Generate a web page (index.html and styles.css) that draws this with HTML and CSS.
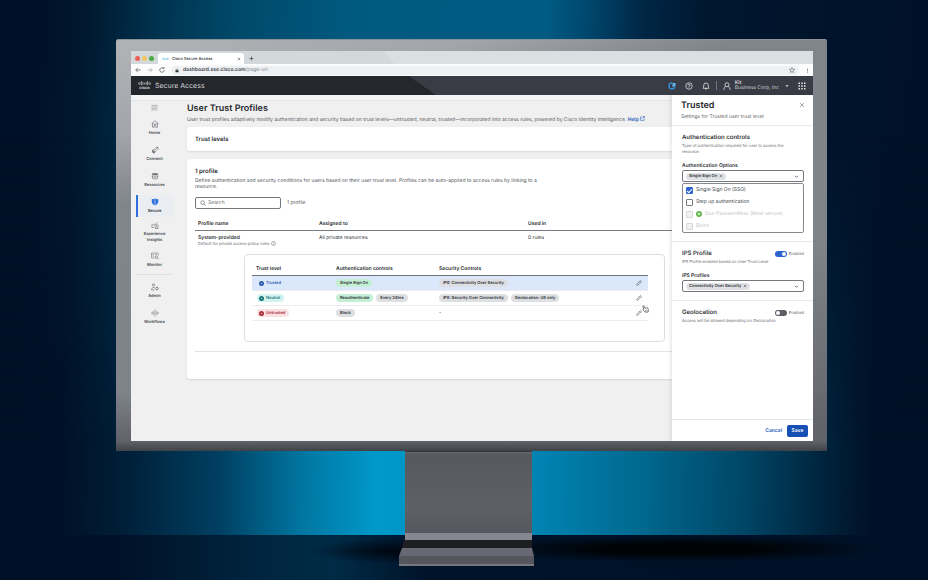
FILE: index.html
```html
<!DOCTYPE html>
<html lang="en">
<head>
<meta charset="utf-8">
<title>Cisco Secure Access</title>
<link rel="stylesheet" href="styles.css">
</head>
<body>
<svg class="sprite" aria-hidden="true">
  <symbol id="cisco" viewBox="0 0 28 10"><path d="M1 4v2M4.200 2.500v5M7.400 0v7.500M10.600 2.500v5M14 4v2M17.400 2.500v5M20.600 0v7.500M23.800 2.500v5M27 4v2" fill="none" stroke="currentColor" stroke-width="1.500" stroke-linecap="round"/></symbol>
  <symbol id="pencil" viewBox="0 0 16 16"><path d="M2 14l1-4 7.500-7.500q1.500-1.500 3 0t0 3L6 13zM8.500 4.500l3 3" fill="none" stroke="currentColor" stroke-width="1.600"/></symbol>
  <symbol id="chevron" viewBox="0 0 16 16"><path d="M3 5.500l5 5 5-5" fill="none" stroke="currentColor" stroke-width="2"/></symbol>
  <symbol id="cross" viewBox="0 0 16 16"><path d="M3 3l10 10M13 3L3 13" fill="none" stroke="currentColor" stroke-width="1.800"/></symbol>
</svg>
<div class="stage">
  <div class="monitor">
    <div class="screen">
      <div class="tabs">
        <span class="dot red"></span><span class="dot yellow"></span><span class="dot green"></span>
        <div class="tab"><svg class="tab-logo"><use href="#cisco"/></svg><span>Cisco Secure Access</span><button class="plain tab-close" aria-label="Close tab"><svg><use href="#cross"/></svg></button></div>
        <button class="plain new-tab" aria-label="New tab"><svg viewBox="0 0 16 16"><path d="M8 2v12M2 8h12" stroke="currentColor" stroke-width="2"/></svg></button>
      </div>
      <div class="toolbar">
        <svg class="nav-icon" viewBox="0 0 16 16"><path d="M15 8H2M8 2L2 8l6 6" fill="none" stroke="currentColor" stroke-width="2"/></svg>
        <svg class="nav-icon muted" viewBox="0 0 16 16"><path d="M1 8h13M8 2l6 6-6 6" fill="none" stroke="currentColor" stroke-width="2"/></svg>
        <svg class="nav-icon" viewBox="0 0 16 16"><path d="M12 3.500A6 6 0 1 0 14 8M9 4h4.500V0" fill="none" stroke="currentColor" stroke-width="2"/></svg>
        <div class="address">
          <svg class="lock" viewBox="0 0 16 16"><rect x="2" y="7" width="12" height="8" rx="1" fill="currentColor"/><path d="M5 7V5a3 3 0 0 1 6 0v2" fill="none" stroke="currentColor" stroke-width="2"/></svg>
          <span><b>dashboard.sse.cisco.com</b>/page-url</span>
          <svg class="star" viewBox="0 0 16 16"><path d="M8 1.500l2 4.500 5 .5-3.700 3.300 1 5L8 12l-4.300 2.800 1-5L1 6.500 6 6z" fill="none" stroke="currentColor" stroke-width="1.600"/></svg>
        </div>
        <svg class="more" viewBox="0 0 4 16"><path d="M0 1h4v3H0zM0 7h4v3H0zM0 13h4v3H0z" fill="currentColor"/></svg>
      </div>
      <header class="topbar">
        <div class="brand"><svg class="brand-mark"><use href="#cisco"/></svg><span>cisco</span></div>
        <span class="product">Secure Access</span>
        <svg class="top-icon" viewBox="0 0 16 16"><path d="M9 2A6 6 0 1 0 14 9" fill="none" stroke="#2f9be8" stroke-width="2.500"/><path d="M10 2h5v6h-2l-4 3V3z" fill="#5fb8f2"/></svg>
        <svg class="top-icon" viewBox="0 0 16 16"><circle cx="8" cy="8" r="6.500" fill="none" stroke="currentColor" stroke-width="1.500"/><path d="M5.800 6.500q0-2 2.200-2t2.200 2Q10.200 8 8 8.500V10M8 11v1.500" fill="none" stroke="currentColor" stroke-width="1.500"/></svg>
        <svg class="top-icon" viewBox="0 0 16 16"><path d="M2 12.500h12Q12.500 11 12.500 6.500a4.500 4.500 0 0 0-9 0Q3.500 11 2 12.500zM6 13q2 3 4 0" fill="none" stroke="currentColor" stroke-width="1.600"/></svg>
        <span class="rule"></span>
        <svg class="top-icon" viewBox="0 0 16 16"><circle cx="8" cy="5.500" r="4" fill="none" stroke="currentColor" stroke-width="1.600"/><path d="M1.500 15.500Q2 9.500 5.500 9M14.500 15.500Q14 9.500 10.500 9" fill="none" stroke="currentColor" stroke-width="1.600"/></svg>
        <div class="account"><b>Kit</b><span>Business Corp, Inc</span></div>
        <svg class="caret" viewBox="0 0 16 16"><path d="M2 5h12l-6 7z" fill="currentColor"/></svg>
        <svg class="top-icon" viewBox="0 0 16 16"><path d="M1 1h3v3H1zM6.500 1h3v3h-3zM12 1h3v3h-3zM1 6.500h3v3H1zM6.500 6.500h3v3h-3zM12 6.500h3v3h-3zM1 12h3v3H1zM6.500 12h3v3h-3zM12 12h3v3h-3z" fill="currentColor"/></svg>
      </header>
      <div class="body">
        <div class="workspace">
          <div class="strip"></div>
          <div class="columns">
            <nav class="sidebar">
              <button class="plain menu" aria-label="Menu"><svg viewBox="0 0 16 16"><path d="M1 3h14M1 6.500h14M1 10h14M1 13.500h14" stroke="currentColor" stroke-width="1.200"/></svg></button>
              <a class="item" href="#"><svg viewBox="0 0 16 16"><path d="M1 7l7-5.500L15 7M3 6v8.500h3.500V10h3v4.500H13V6M4 8h8" fill="none" stroke="currentColor" stroke-width="1.300"/></svg>Home</a>
              <a class="item" href="#"><svg viewBox="0 0 16 16"><path d="M2 7l7 7-4 1-3-3z" fill="currentColor"/><path d="M4 8l3-2 3 3-2 3zM9 2.500h5V8M14 2L9 7" fill="none" stroke="currentColor" stroke-width="1.400"/></svg>Connect</a>
              <a class="item" href="#"><svg viewBox="0 0 16 16"><path d="M2 3q6-2.500 12 0v3H2z" fill="currentColor"/><path d="M1 8h14M3 8v5q5 2 10 0V8M6 10.500h4" fill="none" stroke="currentColor" stroke-width="1.400"/></svg>Resources</a>
              <a class="item active" href="#"><svg viewBox="0 0 16 16"><path d="M7.400 1Q5 2.500 1.500 2.500v5Q2 13 7.400 15z" fill="#2f70df"/><path d="M8.600 1Q11 2.500 14.500 2.500v5Q14 13 8.600 15z" fill="#2f70df"/></svg>Secure</a>
              <a class="item tall" href="#"><svg viewBox="0 0 16 16"><path d="M1 13h5M1 10l4-4 3 1 5-5M2 7v5" fill="none" stroke="currentColor" stroke-width="1.200"/><circle cx="11" cy="10.500" r="3.500" fill="none" stroke="currentColor" stroke-width="1.300"/><path d="M11 8.500v3M8 15h7" stroke="currentColor" stroke-width="1.200"/></svg>Experience<br>Insights</a>
              <a class="item" href="#"><svg viewBox="0 0 16 16"><path d="M1 2h13v5M1 2v10h6M3 5h3M8 5h3M3 8h3" fill="none" stroke="currentColor" stroke-width="1.200"/><circle cx="10.500" cy="10" r="2.500" fill="none" stroke="currentColor" stroke-width="1.300"/><path d="M12.500 12l3 3" stroke="currentColor" stroke-width="1.300"/></svg>Monitor</a>
              <hr>
              <a class="item" href="#"><svg viewBox="0 0 16 16"><circle cx="5" cy="4" r="2.300" fill="none" stroke="currentColor" stroke-width="1.400"/><path d="M1 14q0-5 4-5 2 0 3 1.500M1 14h6" fill="none" stroke="currentColor" stroke-width="1.400"/><circle cx="12" cy="11" r="2.600" fill="none" stroke="currentColor" stroke-width="1.800"/></svg>Admin</a>
              <a class="item" href="#"><svg viewBox="0 0 16 16"><path d="M0 8h4M12 8h4M8 1v4M8 11v4M5 4Q2.500 8 5 12M11 4q2.500 4 0 8" fill="none" stroke="currentColor" stroke-width="1.300"/><circle cx="8" cy="8" r="1.500" fill="currentColor"/></svg>Workflows</a>
            </nav>
            <main class="main">
              <h1>User Trust Profiles</h1>
              <p class="lead">User trust profiles adaptively modify authentication and security based on trust levels—untrusted, neutral, trusted—incorporated into access rules, powered by Cisco Identity Intelligence. <a href="#">Help <svg viewBox="0 0 16 16"><path d="M7 3H2v11h11V9M9 1.500h5.500V7M14 2L7.500 8.500" fill="none" stroke="currentColor" stroke-width="1.800"/></svg></a></p>
              <section class="card levels"><h2>Trust levels</h2></section>
              <section class="card profiles">
                <h2 class="count">1 profile</h2>
                <p class="about">Define authentication and security conditions for users based on their user trust level. Profiles can be auto-applied to access rules by linking to a resource.</p>
                <div class="filter">
                  <label class="search"><svg viewBox="0 0 16 16"><circle cx="7" cy="7" r="5" fill="none" stroke="currentColor" stroke-width="1.500"/><path d="M11 11l4 4" stroke="currentColor" stroke-width="1.500"/></svg><input type="search" placeholder="Search" aria-label="Search"></label>
                  <span>1 profile</span>
                </div>
                <table class="list">
                  <colgroup><col class="c-name"><col class="c-assigned"><col></colgroup>
                  <thead><tr><th>Profile name</th><th>Assigned to</th><th>Used in</th></tr></thead>
                  <tbody>
                    <tr class="row"><td><b>System-provided</b><small>Default for private access policy rules <svg viewBox="0 0 16 16"><circle cx="8" cy="8" r="6.500" fill="none" stroke="currentColor" stroke-width="1.500"/><path d="M8 4v2M8 7v5" stroke="currentColor" stroke-width="1.500"/></svg></small></td><td>All private resources</td><td>0 rules</td></tr>
                    <tr><td colspan="3">
                      <div class="nested">
                        <table class="trust">
                          <colgroup><col class="t-level"><col class="t-auth"><col><col class="t-edit"></colgroup>
                          <thead><tr><th>Trust level</th><th>Authentication controls</th><th>Security Controls</th><th></th></tr></thead>
                          <tbody>
                            <tr class="selected"><td><span class="level blue"><i></i>Trusted</span></td><td><span class="tag mint">Single Sign On</span></td><td><span class="tag">IPS: Connectivity Over Security</span></td><td><button class="plain edit" aria-label="Edit Trusted"><svg><use href="#pencil"/></svg></button></td></tr>
                            <tr><td><span class="level teal"><i></i>Neutral</span></td><td><span class="tag mint">Reauthenticate</span><span class="tag">Every 24hrs</span></td><td><span class="tag">IPS: Security Over Connectivity</span><span class="tag">Geolocation: US only</span></td><td><button class="plain edit" aria-label="Edit Neutral"><svg><use href="#pencil"/></svg></button></td></tr>
                            <tr><td><span class="level crimson"><i></i>Untrusted</span></td><td><span class="tag">Block</span></td><td>-</td><td><button class="plain edit" aria-label="Edit Untrusted"><svg><use href="#pencil"/></svg></button><svg class="pointer" viewBox="0 0 16 18"><path d="M4 9L2 3.500Q2 1 4 2l2.500 5L12 6q2 .5 2.500 4L14 16H7L2.500 11Q1.500 9 4 9z" fill="#fff" stroke="#555" stroke-width="1.800"/><path d="M8 10v4M11 10v4" stroke="#555"/></svg></td></tr>
                          </tbody>
                        </table>
                      </div>
                    </td></tr>
                  </tbody>
                </table>
              </section>
            </main>
          </div>
        </div>
        <aside class="drawer">
          <div class="drawer-head"><div><h2>Trusted</h2><p>Settings for Trusted user trust level</p></div><button class="plain close" aria-label="Close"><svg><use href="#cross"/></svg></button></div>
          <section class="group">
            <h3>Authentication controls</h3>
            <p>Type of authentication required for user to access the resource.</p>
            <span class="label" id="auth-label">Authentication Options</span>
            <button class="combo" aria-haspopup="listbox" aria-expanded="true" aria-labelledby="auth-label"><span class="chip">Single Sign On <svg><use href="#cross"/></svg></span><svg class="open"><use href="#chevron"/></svg></button>
            <div class="options">
              <label><input type="checkbox" checked>Single Sign On (SSO)</label>
              <label><input type="checkbox">Step up authentication</label>
              <label class="off"><input type="checkbox" disabled><span class="duo"></span>Duo Passwordless (Most secure)</label>
              <label class="off"><input type="checkbox" disabled>Block</label>
            </div>
          </section>
          <section class="group">
            <div class="line"><h3>IPS Profile</h3><label class="switch"><input type="checkbox" role="switch" checked>Enabled</label></div>
            <p>IPS Profile enabled based on User Trust Level</p>
            <span class="label" id="ips-label">IPS Profiles</span>
            <button class="combo" aria-haspopup="listbox" aria-labelledby="ips-label"><span class="chip">Connectivity Over Security <svg><use href="#cross"/></svg></span><svg class="open"><use href="#chevron"/></svg></button>
          </section>
          <section class="group last">
            <div class="line"><h3>Geolocation</h3><label class="switch"><input type="checkbox" role="switch">Enabled</label></div>
            <p>Access will be allowed depending on Geolocation</p>
          </section>
          <div class="actions"><button class="plain cancel">Cancel</button><button class="save">Save</button></div>
        </aside>
      </div>
    </div>
  </div>
  <svg class="stand" viewBox="0 0 136 115" aria-hidden="true">
    <defs><linearGradient id="neck" x2="0" y2="1"><stop offset="0" stop-color="#55585e"/><stop offset=".7" stop-color="#5d6066"/><stop offset="1" stop-color="#56575f"/></linearGradient><linearGradient id="foot" x2="0" y2="1"><stop offset="0" stop-color="#686975"/><stop offset="1" stop-color="#666773"/></linearGradient></defs>
    <path d="M6 0h127v82H6z" fill="url(#neck)"/><path d="M6 0h127v1H6z" fill="#37393d"/><path d="M6 1.500h127v1H6z" fill="#6d6f75"/>
    <path d="M6 82h127v7H6z" fill="#85868f"/><path d="M5 89h128v8H3z" fill="#1e1f23"/>
    <path d="M3 97h130l2 8H0z" fill="url(#foot)"/><path d="M0 105h135v10H0z" fill="#55565d"/><path d="M0 113h135v2H0z" fill="#77787e"/>
  </svg>
</div>
</body>
</html>
```
FILE: styles.css
```css
* { box-sizing: border-box; margin: 0; padding: 0; }
body { font: 5px/6px Inter, "Liberation Sans", sans-serif; text-rendering: geometricPrecision; color: #2a2d32; background: #001026; }
.sprite { position: absolute; width: 0; height: 0; }
button, input { font: inherit; color: inherit; text-rendering: inherit; }
svg { display: block; flex: none; }
a { color: inherit; text-decoration: none; }
.plain { background: none; border: 0; }

.stage {
  position: relative; isolation: isolate;
  min-height: 100vh; display: flex; flex-direction: column; padding: 39px 101px 14px 116px;
  background:
    radial-gradient(ellipse 200px 13px at 680px calc(100% - 31px), #000306 40%, transparent) no-repeat,
    radial-gradient(ellipse 100px 13px at 410px calc(100% - 29px), #000814 20%, transparent) no-repeat,
    linear-gradient(90deg, #001026 12%, #00253f 28%, #002a45 36%, #001329 46%, #001026) 0 100% / 100% 45px no-repeat,
    linear-gradient(93deg, #001026 4%, #00182f 9%, #003450 17%, #00496a 25%, #005a80 37%, #005b83 57%, #00446a 62%, #002746 67%, #00162f 74%, #001026);
}
/* Light on the wall behind the stand */
.stage::before {
  content: ""; position: absolute; z-index: -1; left: 0; right: 0; bottom: 45px; height: 400px;
  background: linear-gradient(91deg, #001026 7%, #001f38 14%, #003f61 24%, #0076a1 33%, #0099ca 41%, #0088b8 56%, #006990 69%, #004767 80%, #002640 88%, #001026 94%);
  mask-image: linear-gradient(0deg, #000 90px, transparent);
}
.monitor {
  flex: 1; display: flex; padding: 11px 14px 10px 15px; border-radius: 2px;
  background: linear-gradient(0deg, #3f4247, #606369 10px, transparent 60px),
    linear-gradient(165deg, #b0b4b7, #a2a6aa 16%, #80848b 28%, #7f838a 65%, #5f6268);
  border-top: 1px solid #8b9298;
}
.screen { flex: 1; min-width: 0; display: flex; flex-direction: column; background: #f0f0f1; overflow: hidden; }

.tabs { height: 13px; display: flex; align-items: center; padding: 2px 4px 0; background: linear-gradient(50deg, #d3d8db 38%, #dadfe2 38%); font-size: 4px; }
.dot { width: 5px; height: 5px; border-radius: 50%; margin-right: 2px; }
.red { background: #ec5f59; } .yellow { background: #f3c660; } .green { background: #4fa84a; }
.tab { align-self: stretch; width: 86px; display: flex; align-items: center; gap: 3px; margin-left: 2px; padding: 0 3px 0 4px; background: #fff; border-radius: 3px 3px 0 0; font-weight: 500; }
.tab-logo { width: 7px; height: 4px; color: #2fb7c9; }
.tab-close { margin-left: auto; }
.tab-close svg { width: 4px; height: 4px; }
.new-tab { margin-left: 5px; }
.new-tab svg { width: 5px; height: 5px; }
.toolbar { height: 12px; display: flex; align-items: center; gap: 6px; padding: 0 5px 0 4px; background: #fcfcfd; }
.nav-icon { width: 6px; height: 6px; color: #55585c; }
.muted { color: #aaa; }
.address { flex: 1; display: flex; align-items: center; gap: 4px; height: 9px; padding: 0 4px; border-radius: 5px; background: #eef1f4; color: #85898f; }
.address b { color: #3c3f44; font-weight: 600; }
.lock { width: 4px; height: 5px; color: #333; }
.star { width: 6px; height: 6px; margin-left: auto; color: #666; }
.more { width: 1px; height: 5px; margin-left: 2px; color: #555; }

.topbar { height: 19px; display: flex; align-items: center; gap: 9px; padding: 0 7px; color: #e4e5e8; background: linear-gradient(35deg, #24272b 43%, transparent 43%), #3a3c45; }
.brand { display: flex; flex-direction: column; align-items: center; color: #d0d2d5; line-height: 4px; font-size: 4px; font-weight: 700; }
.brand-mark { width: 13px; height: 5px; }
.product { font-size: 7px; line-height: 8px; margin-right: auto; margin-left: -5px; color: #d6d8db; }
.top-icon { width: 8px; height: 8px; }
.rule { width: 1px; height: 9px; margin: 0 -3px; background: #75777f; }
.account { display: flex; flex-direction: column; line-height: 5px; padding-top: 1px; margin-left: -5px; color: #c9cbd0; }
.caret { width: 4px; height: 4px; margin-left: -3px; }

.body { flex: 1; display: flex; }
.workspace { flex: 1; min-width: 0; display: flex; flex-direction: column; }
.strip { height: 6px; background: #f1f3f5; border-bottom: 1px solid #e4e5e7; }
.columns { flex: 1; display: flex; }
.sidebar { width: 56px; display: flex; flex-direction: column; gap: 4px; padding: 2px 14px 0 5px; }
.menu { display: flex; width: 100%; justify-content: center; height: 8px; align-items: center; margin-bottom: 2px; color: #888b90; }
.menu svg { width: 7px; height: 7px; }
.item { height: 22px; display: block; padding: 3px 2px 0 0; text-align: center; font-size: 4px; line-height: 6px; font-weight: 600; color: #44474c; border-left: 2px solid transparent; white-space: nowrap; }
.item svg { width: 8px; height: 8px; margin: 0 auto 2px; color: #74777b; }
.active { background: #eaedf2; border-left-color: #2f70df; color: #2d3035; }
.tall { height: 24px; padding-top: 0; }
.sidebar hr { border: 0; border-top: 1px solid #dfe0e2; margin: -1px 0 1px; }

.main { flex: 1; min-width: 0; padding-top: 3px; }
h1 { font-size: 9px; line-height: 10px; font-weight: 600; color: #26292e; }
.lead { margin: 2px 0 3px; line-height: 8px; white-space: nowrap; color: #585b60; }
.lead a { color: #2459b8; font-weight: 600; }
.lead a svg { display: inline-block; width: 5px; height: 5px; }
.card { background: #fff; border-radius: 3px 0 0 3px; padding-left: 8px; box-shadow: 0 1px 2px #0000001a; }
.levels { height: 24px; display: flex; align-items: center; padding-top: 1px; margin-bottom: 8px; }
h2 { font-size: 6px; line-height: 10px; font-weight: 600; color: #24272c; }
.profiles { padding-top: 8px; padding-bottom: 27px; }
.about { width: 346px; margin: 1px 0 7px; color: #53565b; }
.filter { display: flex; align-items: center; gap: 6px; margin-bottom: 8px; color: #53565b; }
.search { width: 86px; height: 12px; display: flex; align-items: center; gap: 2px; padding: 0 4px; border: 1px solid #75787d; border-radius: 2px; }
.search svg { width: 6px; height: 6px; }
.search input { width: 100%; min-width: 0; border: 0; outline: 0; background: none; appearance: none; }
.search input::placeholder { color: #6c6f75; }
table { border-collapse: collapse; table-layout: fixed; width: 100%; text-align: left; }
th { font-weight: 600; color: #24272c; padding-top: 1px; }
.list > thead th { height: 13px; padding-left: 3px; border-bottom: 1px solid #777a80; }
.c-name { width: 121px; } .c-assigned { width: 209px; }
.row td { padding: 4px 0 7px 3px; vertical-align: top; }
.row b { display: block; font-weight: 600; }
.row small { display: block; font-size: 4px; color: #63666b; white-space: nowrap; }
.row small svg { display: inline-block; width: 5px; height: 5px; vertical-align: middle; }
.list { border-bottom: 1px solid #e2e3e5; }
.nested { margin: 0 7px 9px 49px; padding: 7px 16px 20px 7px; border: 1px solid #dcdde0; border-radius: 4px; }
.trust th { height: 14px; padding-left: 4px; border-bottom: 1px solid #6f7278; }
.t-level { width: 80px; } .t-auth { width: 103px; } .t-edit { width: 16px; }
.trust td { height: 15px; padding-left: 4px; border-bottom: 1px solid #ececee; white-space: nowrap; position: relative; }
.selected td { background: #dbe7fb; }
.trust td span { display: inline-flex; align-items: center; height: 8px; border-radius: 4px; padding: 0 4px; font-size: 4px; font-weight: 600; vertical-align: middle; }
.tag { background: #dddfe2; margin-right: 3px; }
.trust .mint { background: #c5efd5; }
.trust .level { padding-left: 2px; margin-left: 1px; gap: 2px; }
.level i { width: 5px; height: 5px; border-radius: 50%; border: 2px solid currentColor; background: #fff; }
.blue { color: #2e5cae; } .teal { color: #17777a; background: #d2f3ef; } .crimson { color: #a92f3a; background: #fbe0e2; }
.edit { display: block; color: #55606e; }
.edit svg { width: 6px; height: 6px; }
.pointer { position: absolute; left: 10px; top: -1px; width: 7px; height: 8px; }

.drawer { width: 141px; display: flex; flex-direction: column; background: #fff; box-shadow: -1px 0 4px #0000001f; }
.drawer p { color: #66696e; }
.drawer-head { display: flex; justify-content: space-between; padding: 6px 8px 5px 9px; border-bottom: 1px solid #e9eaec; }
.drawer-head h2 { font-size: 9px; }
.drawer-head p { margin-top: 3px; }
.close { align-self: flex-start; padding-top: 1px; color: #777; }
.close svg { width: 6px; height: 6px; }
.group { padding: 8px 9px 8px 10px; border-bottom: 1px solid #e9eaec; }
.last { border: 0; }
h3 { font-size: 6px; line-height: 8px; font-weight: 600; color: #303338; }
.group p { margin-top: 1px; padding-right: 10px; font-size: 4px; }
.label { display: block; margin: 8px 0 1px; font-weight: 600; }
.combo { width: 100%; height: 12px; display: flex; align-items: center; justify-content: space-between; padding: 0 4px 0 3px; background: #fff; border: 1px solid #75787d; border-radius: 2px; }
.chip { display: flex; align-items: center; gap: 2px; height: 7px; padding: 0 3px; border-radius: 4px; background: #dfe1e4; font-size: 4px; font-weight: 600; }
.chip svg { width: 4px; height: 4px; }
.open { width: 5px; height: 5px; }
.options { margin-top: 1px; border: 1px solid #85888d; border-radius: 2px; }
.options label { height: 12px; display: flex; align-items: center; gap: 3px; padding-left: 3px; color: #44474c; }
.options input { appearance: none; width: 7px; height: 7px; border: 1px solid #777a80; border-radius: 1px; background: #fff; }
.options input:checked { border-color: #2c63cf; background: #2c63cf; display: grid; place-items: center; }
.options input:checked::before { content: ""; width: 4px; height: 2px; border: solid #fff; border-width: 0 0 1px 1px; transform: rotate(-45deg); }
.options .off { color: #c3c5c8; }
.options .off input { border-color: #d5d7d9; background: #f1f1f2; }
.duo { width: 6px; height: 6px; border: 2px solid #64b84f; border-radius: 50%; }
.line { display: flex; justify-content: space-between; align-items: center; }
.switch { display: flex; align-items: center; gap: 2px; font-size: 4px; color: #5d6065; }
.switch input { appearance: none; width: 12px; height: 6px; padding: 1px; border-radius: 3px; background: #5c5f65; display: flex; }
.switch input::before { content: ""; width: 4px; height: 4px; border-radius: 50%; background: #fff; }
.switch input:checked { background: #2c63cf; justify-content: flex-end; }
.actions { margin-top: auto; height: 22px; display: flex; align-items: center; justify-content: flex-end; gap: 5px; padding-right: 5px; border-top: 1px solid #e6e7e9; font-weight: 600; }
.cancel { color: #2459b8; }
.save { width: 21px; height: 12px; border: 0; border-radius: 2px; background: #1650b5; color: #fff; }
.stand { width: 136px; height: 115px; margin-left: calc(50% - 73px); }
```
